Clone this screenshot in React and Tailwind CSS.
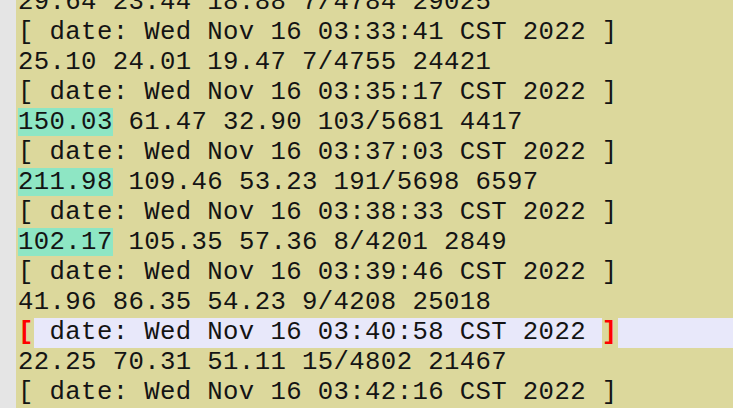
const rows = [
  { text: '29.64 23.44 18.88 7/4784 29025' },
  { text: '[ date: Wed Nov 16 03:33:41 CST 2022 ]' },
  { text: '25.10 24.01 19.47 7/4755 24421' },
  { text: '[ date: Wed Nov 16 03:35:17 CST 2022 ]' },
  { mark: '150.03', text: ' 61.47 32.90 103/5681 4417' },
  { text: '[ date: Wed Nov 16 03:37:03 CST 2022 ]' },
  { mark: '211.98', text: ' 109.46 53.23 191/5698 6597' },
  { text: '[ date: Wed Nov 16 03:38:33 CST 2022 ]' },
  { mark: '102.17', text: ' 105.35 57.36 8/4201 2849' },
  { text: '[ date: Wed Nov 16 03:39:46 CST 2022 ]' },
  { text: '41.96 86.35 54.23 9/4208 25018' },
  { current: true, text: ' date: Wed Nov 16 03:40:58 CST 2022 ' },
  { text: '22.25 70.31 51.11 15/4802 21467' },
  { text: '[ date: Wed Nov 16 03:42:16 CST 2022 ]' },
];

export default function App() {
  return (
    <div className="flex h-[408px] w-[733px] overflow-hidden bg-[#dcd89c] text-[#141414]">
      <div className="w-[16px] shrink-0 bg-[#e5e5e5]" />
      <div
        className="mt-[-12px] flex-1 pl-[2px] text-[25.67px] leading-[30px] tracking-[0.38px] whitespace-pre"
        style={{ fontFamily: '"Liberation Mono", monospace' }}
      >
        {rows.map((r, i) =>
          r.current ? (
            <div key={i} className="flex h-[30px]">
              <span className="font-bold text-[#ff0000]">[</span>
              <span className="bg-[#e8e8fa]">{r.text}</span>
              <span className="font-bold text-[#ff0000]">]</span>
              <span className="flex-1 bg-[#e8e8fa]" />
            </div>
          ) : (
            <div key={i} className="h-[30px]">
              {r.mark && (
                <span className="inline-block h-[28px] align-top bg-[#8ee6c4]">{r.mark}</span>
              )}
              {r.text}
            </div>
          )
        )}
      </div>
    </div>
  );
}
